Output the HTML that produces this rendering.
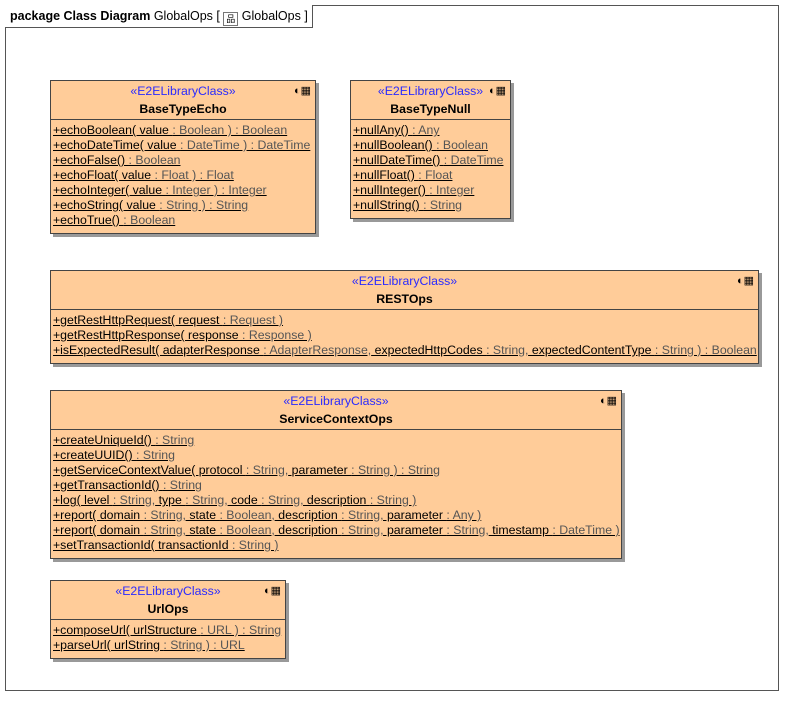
<!DOCTYPE html>
<html><head><meta charset="utf-8"><style>
*{margin:0;padding:0;box-sizing:border-box}
body{width:803px;height:715px;background:#fff;font-family:"Liberation Sans",Arial,sans-serif;font-size:12.3px;position:relative;overflow:hidden}
.frame{position:absolute;left:5px;top:5px;width:774px;height:686px;border:1px solid #555}
.tab{position:absolute;left:5px;top:5px;height:23px;width:308px;border-right:1px solid #555;border-bottom:1px solid #555;font-size:12.5px;padding:4px 0 0 5px;white-space:nowrap;background:#fff}
.box{position:absolute;background:#ffcc99;border:1px solid #444;box-shadow:3px 3px 0 #999}
.st{position:absolute;left:0;right:0;text-align:center;color:#2a2aff;top:3px}
.nm{position:absolute;left:0;right:0;text-align:center;font-weight:bold;top:21px}
.div{position:absolute;left:0;right:0;border-top:1px solid #444}
.rows{position:absolute;left:2px;white-space:nowrap}
.r{height:15px;line-height:15px;text-decoration:underline}
.r i{font-style:normal;color:#555}
.ic{position:absolute;right:4px;top:3px;font-size:11px}
</style></head><body>
<div class="frame"></div>
<div class="tab"><b>package Class Diagram</b> GlobalOps [ <span style="display:inline-block;width:15px;height:14px;border:1px solid #777;vertical-align:-2px;font-size:9px;text-align:center;line-height:12px">品</span> GlobalOps ]</div>

<div class="box" style="left:50px;top:80px;width:266px;height:154px">
<div class="st">«E2ELibraryClass»</div><div class="ic">◐▦</div><div class="nm">BaseTypeEcho</div>
<div class="div" style="top:38px"></div>
<div class="rows" style="top:42px">
<div class="r">+echoBoolean( value <i>: Boolean ) : Boolean</i></div>
<div class="r">+echoDateTime( value <i>: DateTime ) : DateTime</i></div>
<div class="r">+echoFalse() <i>: Boolean</i></div>
<div class="r">+echoFloat( value <i>: Float ) : Float</i></div>
<div class="r">+echoInteger( value <i>: Integer ) : Integer</i></div>
<div class="r">+echoString( value <i>: String ) : String</i></div>
<div class="r">+echoTrue() <i>: Boolean</i></div>
</div></div>

<div class="box" style="left:350px;top:80px;width:161px;height:139px">
<div class="st">«E2ELibraryClass»</div><div class="ic">◐▦</div><div class="nm">BaseTypeNull</div>
<div class="div" style="top:38px"></div>
<div class="rows" style="top:42px">
<div class="r">+nullAny() <i>: Any</i></div>
<div class="r">+nullBoolean() <i>: Boolean</i></div>
<div class="r">+nullDateTime() <i>: DateTime</i></div>
<div class="r">+nullFloat() <i>: Float</i></div>
<div class="r">+nullInteger() <i>: Integer</i></div>
<div class="r">+nullString() <i>: String</i></div>
</div></div>

<div class="box" style="left:50px;top:270px;width:709px;height:94px">
<div class="st">«E2ELibraryClass»</div><div class="ic">◐▦</div><div class="nm">RESTOps</div>
<div class="div" style="top:38px"></div>
<div class="rows" style="top:42px">
<div class="r">+getRestHttpRequest( request <i>: Request )</i></div>
<div class="r">+getRestHttpResponse( response <i>: Response )</i></div>
<div class="r">+isExpectedResult( adapterResponse <i>: AdapterResponse,</i> expectedHttpCodes <i>: String,</i> expectedContentType <i>: String ) : Boolean</i></div>
</div></div>

<div class="box" style="left:50px;top:390px;width:572px;height:169px">
<div class="st">«E2ELibraryClass»</div><div class="ic">◐▦</div><div class="nm">ServiceContextOps</div>
<div class="div" style="top:38px"></div>
<div class="rows" style="top:42px">
<div class="r">+createUniqueId() <i>: String</i></div>
<div class="r">+createUUID() <i>: String</i></div>
<div class="r">+getServiceContextValue( protocol <i>: String,</i> parameter <i>: String ) : String</i></div>
<div class="r">+getTransactionId() <i>: String</i></div>
<div class="r">+log( level <i>: String,</i> type <i>: String,</i> code <i>: String,</i> description <i>: String )</i></div>
<div class="r">+report( domain <i>: String,</i> state <i>: Boolean,</i> description <i>: String,</i> parameter <i>: Any )</i></div>
<div class="r">+report( domain <i>: String,</i> state <i>: Boolean,</i> description <i>: String,</i> parameter <i>: String,</i> timestamp <i>: DateTime )</i></div>
<div class="r">+setTransactionId( transactionId <i>: String )</i></div>
</div></div>

<div class="box" style="left:50px;top:580px;width:236px;height:79px">
<div class="st">«E2ELibraryClass»</div><div class="ic">◐▦</div><div class="nm">UrlOps</div>
<div class="div" style="top:38px"></div>
<div class="rows" style="top:42px">
<div class="r">+composeUrl( urlStructure <i>: URL ) : String</i></div>
<div class="r">+parseUrl( urlString <i>: String ) : URL</i></div>
</div></div>
</body></html>
